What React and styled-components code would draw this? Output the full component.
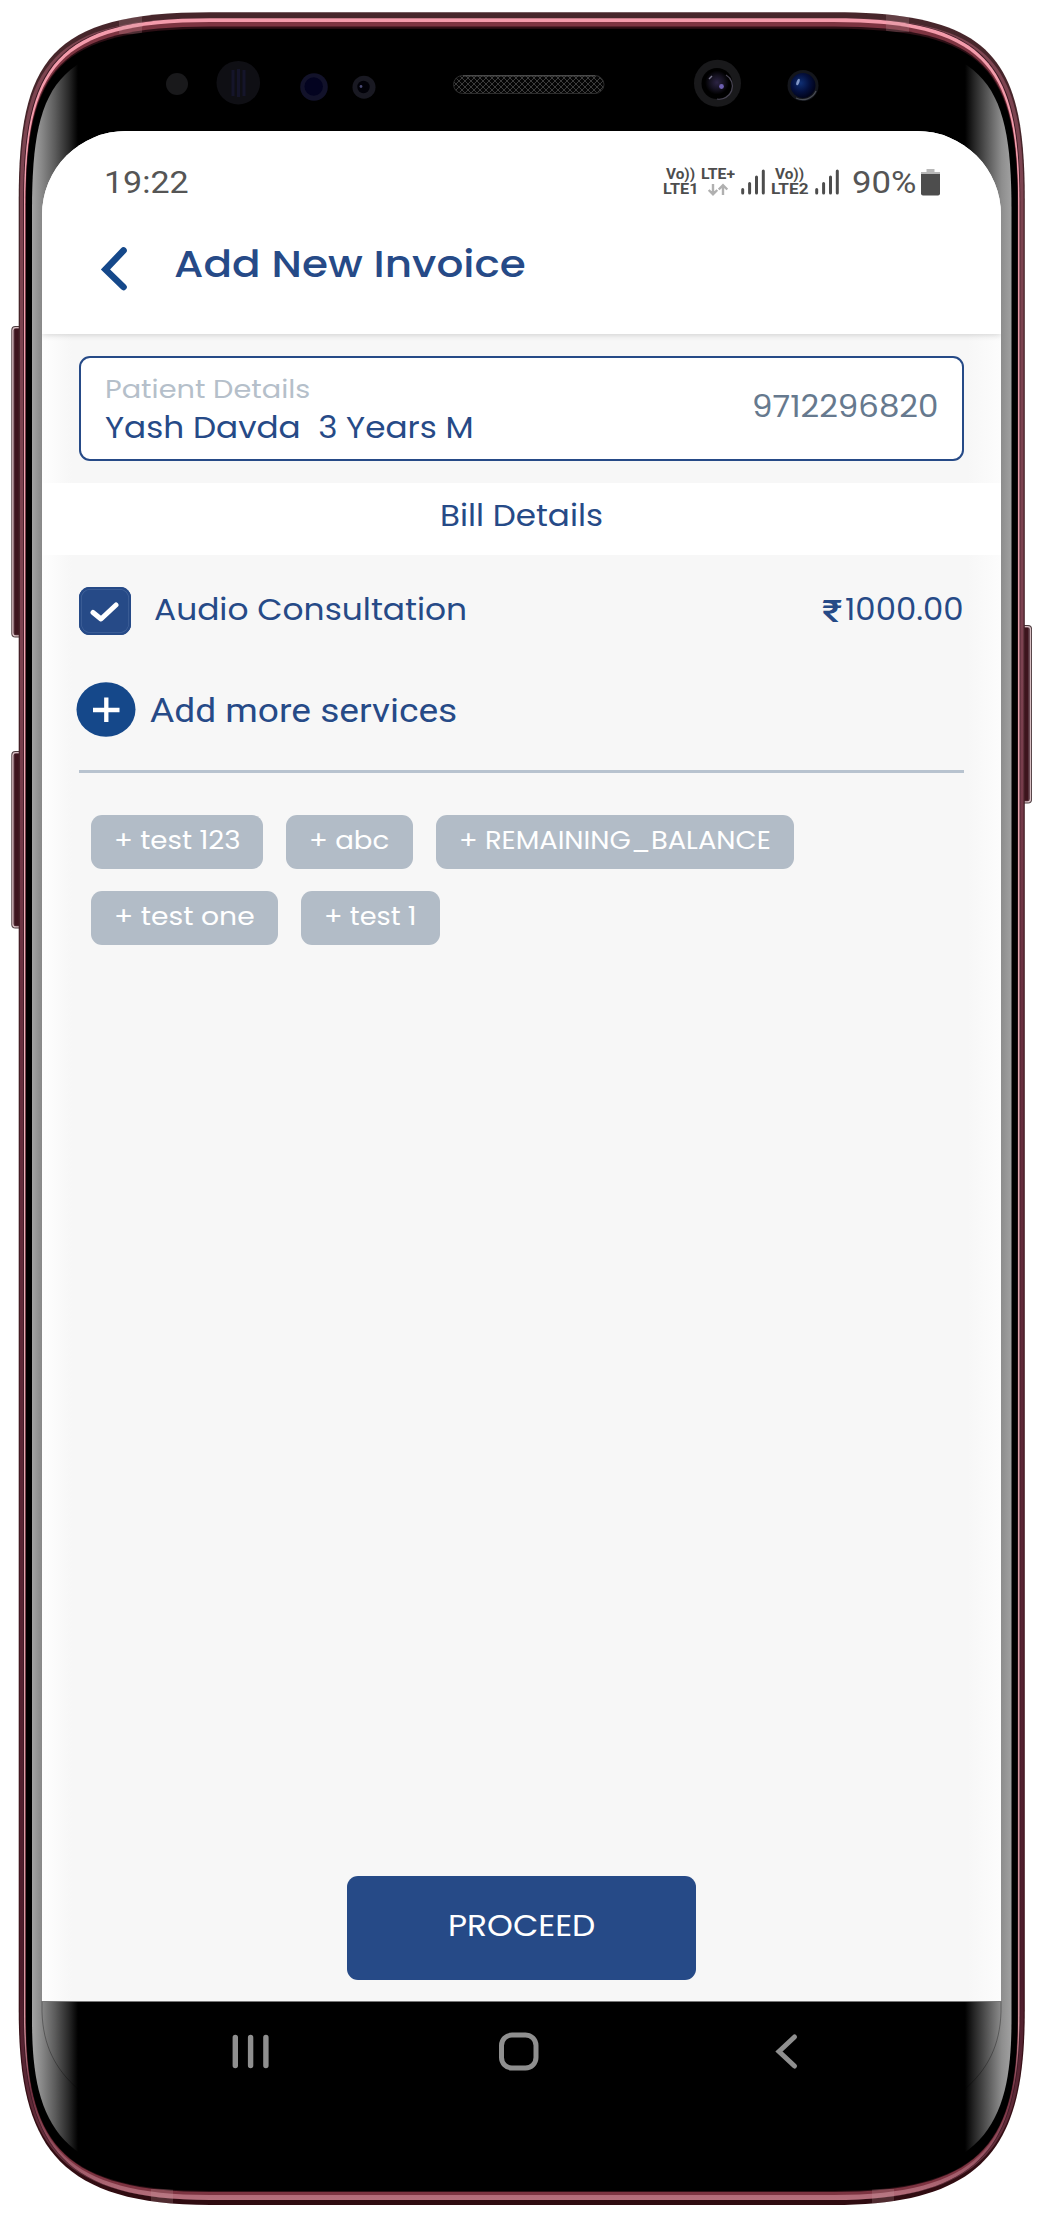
import React, { useLayoutEffect, useRef, useState } from "react";
import styled, { createGlobalStyle } from "styled-components";

const GlobalStyle = createGlobalStyle`
  html, body { margin: 0; padding: 0; background: #fff; }
  *, *::before, *::after { box-sizing: border-box; }
`;

const navy = "#264a87";
const deepBlue = "#15488a";
const slate = "#b2bcc7";
const uiFont = `Poppins, Inter, "Noto Sans", sans-serif`;
const systemFont = `Roboto, "Noto Sans", sans-serif`;

/* ---------- text that fills a given measure ---------- */

const Measure = styled.span`
  display: block;
  flex: none;
  width: ${(p) => p.$width}px;
  height: ${(p) => p.$line}px;
  line-height: ${(p) => p.$line}px;
  font-family: ${(p) => (p.$system ? systemFont : uiFont)};
  font-feature-settings: ${(p) => (p.$system ? "normal" : '"cv11" 1')};
  font-size: ${(p) => p.$size}px;
  font-weight: ${(p) => p.$weight || 400};
  color: ${(p) => p.$color || navy};
  text-align: left;
  white-space: pre;
`;

const Stretch = styled.span`
  display: inline-block;
  transform-origin: 0 50%;
`;

function FitText({ width, size, line, weight, color, system, children }) {
  const ref = useRef(null);
  const [scale, setScale] = useState(1);
  useLayoutEffect(() => {
    setScale(width / ref.current.offsetWidth);
  }, [width, size, weight, children]);
  return (
    <Measure
      $width={width}
      $size={size}
      $line={line || Math.round(size * 1.3)}
      $weight={weight}
      $color={color}
      $system={system}
    >
      <Stretch ref={ref} style={{ transform: `scaleX(${scale})` }}>
        {children}
      </Stretch>
    </Measure>
  );
}

/* ---------- device body ---------- */

const Device = styled.main`
  position: relative;
  width: 1042px;
  height: 2223px;
  overflow: hidden;
  padding: 131px 41px 0 42px;
  background: #fff;
`;

const BodyArt = styled.svg`
  position: absolute;
  inset: 0;
  display: block;
`;

const MIRROR = 1043.5;

function shell(l, t, b, k) {
  const mix = (a, z) => a + (z - a) * k;
  const y0 = mix(200, 205);
  const y1 = mix(61, 70);
  const x2 = mix(49, 58);
  const v0 = mix(2010, 2015);
  const v1 = mix(2139, 2140);
  const w2 = mix(52, 58);
  const m = (x) => MIRROR - x;
  return `M${l} ${y0}C${l} ${y1} ${x2} ${t} 210 ${t}H${m(210)}C${m(x2)} ${t} ${m(l)} ${y1} ${m(l)} ${y0}V${v0}C${m(l)} ${v1} ${m(w2)} ${b} ${m(210)} ${b}H210C${w2} ${b} ${l} ${v1} ${l} ${v0}Z`;
}

const glassEdge =
  "M32 210C32 75 60 40 215 40H828.5C983.5 40 1011.5 75 1011.5 210V2020C1011.5 2130 981.5 2180 828.5 2185H215C62 2180 32 2130 32 2020Z";

function SideKey({ x, y, height, right }) {
  return (
    <g>
      <rect x={x} y={y} width="16" height={height} rx="4" fill="#4a3a3d" />
      <rect x={x + 0.9} y={y + 0.9} width="14.2" height={height - 1.8} rx="3.4" fill="#d9c0c4" />
      <rect x={x + 2.2} y={y + 2.2} width="11.6" height={height - 4.4} rx="2.4" fill="#54303a" />
      <rect x={right ? x + 3 : x + 3.4} y={y + 3} width="9" height={height - 6} fill="#3d141d" />
    </g>
  );
}

function DeviceBody() {
  return (
    <BodyArt width="1042" height="2223" viewBox="0 0 1042 2223" aria-hidden="true">
      <defs>
        <linearGradient id="rim" x1="0" y1="0" x2="0" y2="1">
          <stop offset="0" stopColor="#47262b" />
          <stop offset="0.85" stopColor="#42161f" />
          <stop offset="1" stopColor="#2f0b10" />
        </linearGradient>
        <linearGradient id="side" x1="0" y1="0" x2="0" y2="1">
          <stop offset="0" stopColor="#7c4450" />
          <stop offset="0.3" stopColor="#7c4250" />
          <stop offset="0.45" stopColor="#6a3040" />
          <stop offset="0.9" stopColor="#4d1c2b" />
          <stop offset="1" stopColor="#6a3340" />
        </linearGradient>
        <linearGradient id="shine" x1="0" y1="0" x2="0" y2="1">
          <stop offset="0" stopColor="#f49bab" />
          <stop offset="0.5" stopColor="#f0b6be" />
          <stop offset="0.92" stopColor="#d998a2" />
          <stop offset="0.95" stopColor="#6f2f40" />
          <stop offset="1" stopColor="#b56e7b" />
        </linearGradient>
        <linearGradient id="leftGlow" gradientUnits="userSpaceOnUse" x1="32" y1="0" x2="78" y2="0">
          <stop offset="0" stopColor="#a3a3a3" />
          <stop offset="0.2" stopColor="#8a8a8a" />
          <stop offset="0.5" stopColor="#5c5c5c" />
          <stop offset="0.8" stopColor="#282828" />
          <stop offset="1" stopColor="#000" />
        </linearGradient>
        <linearGradient id="rightGlow" gradientUnits="userSpaceOnUse" x1="1011" y1="0" x2="965" y2="0">
          <stop offset="0" stopColor="#a0a0a0" />
          <stop offset="0.2" stopColor="#8e8e8e" />
          <stop offset="0.5" stopColor="#5a5a5a" />
          <stop offset="0.8" stopColor="#262626" />
          <stop offset="1" stopColor="#000" />
        </linearGradient>
        <pattern id="mesh" width="6" height="6" patternUnits="userSpaceOnUse">
          <rect width="6" height="6" fill="#050505" />
          <path d="M0 0l6 6M6 0l-6 6" stroke="#3c3c3c" strokeWidth="1" />
        </pattern>
        <radialGradient id="blueLens" cx="0.4" cy="0.4" r="0.6">
          <stop offset="0" stopColor="#0f2f74" />
          <stop offset="0.6" stopColor="#04103e" />
          <stop offset="1" stopColor="#01041c" />
        </radialGradient>
        <radialGradient id="lens" cx="0.5" cy="0.5" r="0.5">
          <stop offset="0" stopColor="#2c2444" />
          <stop offset="0.6" stopColor="#14111f" />
          <stop offset="1" stopColor="#000" />
        </radialGradient>
        <clipPath id="bodyClip">
          <path d={shell(18.7, 12.3, 2205, 0)} />
        </clipPath>
        <clipPath id="glassClip">
          <path d={glassEdge} />
        </clipPath>
      </defs>

      <SideKey x={11.3} y={326} height={311.5} />
      <SideKey x={11.3} y={751} height={177.5} />
      <SideKey x={1016} y={625} height={178.5} right />

      <path d={shell(18.7, 12.3, 2205, 0)} fill="url(#rim)" />
      <path d={shell(20, 18, 2200, 0.2)} fill="url(#side)" />
      <path d={shell(23.2, 18, 2200, 0.5)} fill="#3a1822" />
      <path d={shell(24, 18.2, 2200, 0.6)} fill="url(#shine)" />
      <path d={shell(25.4, 22, 2195, 0.85)} fill="#7d3441" />
      <path d={shell(25.6, 26.5, 2192, 0.95)} fill="#2c0f15" />
      <g clipPath="url(#bodyClip)" fill="#c9a0a6" opacity="0.22">
        <rect x="119" y="12" width="23" height="22" />
        <rect x="886" y="12" width="23" height="20" />
        <rect x="151" y="2189" width="22" height="16" />
        <rect x="872" y="2189" width="22" height="16" />
      </g>
      <path d={shell(26, 28.7, 2191, 1)} fill="#000" />

      <g clipPath="url(#glassClip)">
        <rect x="31" y="40" width="47" height="2150" fill="url(#leftGlow)" />
        <rect x="965" y="40" width="47" height="2150" fill="url(#rightGlow)" />
      </g>
      <path d="M42 2001V2012C43 2045 55 2069 78 2089M1001 2001V2012C1000 2045 988 2069 965 2089" fill="none" stroke="#000" strokeOpacity="0.45" strokeWidth="0.7" />

      <circle cx="177" cy="84" r="11" fill="#19191b" />
      <circle cx="238.3" cy="82.7" r="21.8" fill="#0f0f14" />
      <path d="M233 70v26M238.5 69v28M244 70v26" stroke="#15152a" strokeWidth="3" />
      <circle cx="314" cy="87" r="13.8" fill="#12122a" />
      <circle cx="313.7" cy="86.5" r="9.2" fill="#030320" />
      <circle cx="364" cy="87.2" r="11.5" fill="#191922" />
      <circle cx="363.5" cy="87" r="6.2" fill="#010108" />
      <circle cx="361" cy="86.5" r="1.4" fill="#4a4a74" />
      <rect x="453.5" y="75.5" width="150.5" height="18" rx="9" fill="url(#mesh)" stroke="#2c2c2c" />
      <path d="M463 75.7H595" stroke="#4a4a4a" strokeWidth="1.4" />
      <circle cx="717.5" cy="83.3" r="23.5" fill="#19191b" />
      <circle cx="717" cy="83.5" r="15.5" fill="#000" />
      <circle cx="717" cy="82.5" r="12" fill="url(#lens)" />
      <path d="M726 75a13 13 0 0 1-9 24" fill="none" stroke="#4a4655" strokeWidth="1.2" />
      <circle cx="721.5" cy="86.5" r="2.4" fill="#6d5fb0" />
      <path d="M709 79l3-3" stroke="#77738a" strokeWidth="1.5" />
      <circle cx="803" cy="85.5" r="15.5" fill="#14161c" />
      <circle cx="803" cy="85.5" r="12.5" fill="url(#blueLens)" />
      <ellipse cx="798" cy="82" rx="1.4" ry="3.4" fill="#8398c8" transform="rotate(20 798 82)" />
      <path d="M816 91a14.5 14.5 0 0 1-20 7" fill="none" stroke="#4a4d55" strokeWidth="1.2" />
    </BodyArt>
  );
}

/* ---------- screen ---------- */

const Screen = styled.div`
  position: relative;
  display: flex;
  flex-direction: column;
  height: 1870px;
  border-radius: 84px 84px 0 0;
  overflow: hidden;
  background: linear-gradient(to right, #fefefe 0, #f7f7f7 30px, #f7f7f7 926px, #fcfcfc 959px);
`;

const StatusBar = styled.div`
  position: relative;
  z-index: 2;
  display: flex;
  align-items: center;
  justify-content: space-between;
  flex: none;
  height: 102px;
  padding: 0 61px 0 62px;
  background: #fff;
`;

const StatusIcons = styled.div`
  display: flex;
  align-items: center;
`;

const NetStack = styled.div`
  display: flex;
  flex-direction: column;
  align-items: center;
  height: 30px;
  margin: 0 ${(p) => p.$after}px 1px 0;
`;

const Glyph = styled.svg`
  display: block;
  flex: none;
  margin-left: ${(p) => p.$before || 0}px;
  margin-right: ${(p) => p.$after || 0}px;
`;

const NetLabel = ({ width, children }) => (
  <FitText width={width} size={15.3} line={15} weight={700} color="#4d4d4d" system>
    {children}
  </FitText>
);

function Signal({ after }) {
  return (
    <Glyph $after={after} width="24" height="26" viewBox="0 0 24 26" stroke="#4d4d4d" strokeWidth="3" strokeLinecap="round">
      <path d="M1.7 20.5V24M8.6 14.5V24M15.5 8V24M22.3 2V24" />
    </Glyph>
  );
}

const Header = styled.header`
  display: flex;
  align-items: flex-start;
  flex: none;
  position: relative;
  z-index: 1;
  height: 101px;
  padding: 8px 0 0 58px;
  background: #fff;
  box-shadow: 0 1px 6px rgba(0, 0, 0, 0.16);
`;

const BackIcon = styled.svg`
  display: block;
  margin: 5px 46px 0 0;
`;

const PatientSection = styled.section`
  flex: none;
  height: 148.5px;
  padding: 21.5px 37px 0;
`;

const PatientCard = styled.div`
  display: flex;
  justify-content: space-between;
  height: 105.5px;
  padding: 13px 24px 0 24px;
  border: 2px solid ${navy};
  border-radius: 11px;
  background: #fff;
`;

const PatientText = styled.div`
  display: flex;
  flex-direction: column;
  gap: 2px;
`;

const PhoneNumber = styled.div`
  padding-top: 17px;
`;

const BillHeading = styled.div`
  display: flex;
  justify-content: center;
  align-items: center;
  flex: none;
  height: 72px;
  padding-bottom: 5px;
  background: #fff;
`;

const Services = styled.section`
  display: flex;
  flex-direction: column;
  flex: none;
  padding: 32px 37px 0;
`;

const ServiceRow = styled.div`
  display: flex;
  align-items: center;
  height: 48px;
`;

const CheckBox = styled.div`
  display: grid;
  place-items: center;
  width: 52px;
  height: 48px;
  margin-right: 23px;
  border-radius: 11px;
  background: ${navy};
  box-shadow: inset 0 0 0 2px ${navy}, inset 0 0 0 2.7px #42639a;
`;

const ServiceName = styled.div`
  padding-bottom: 2px;
`;

const Price = styled.div`
  display: flex;
  align-items: center;
  gap: 3px;
  margin-left: auto;
  padding-bottom: 2px;
`;

const CurrencySign = styled.div`
  padding-top: 4px;
`;

const AddRow = styled.div`
  display: flex;
  align-items: center;
  height: 55px;
  margin: 47px 0 33px -3px;
`;

const AddIcon = styled.svg`
  display: block;
  margin-right: 14px;
`;

const AddLabel = styled.div`
  padding-top: 3px;
`;

const Divider = styled.hr`
  width: 100%;
  height: 3px;
  margin: 0 0 42.5px;
  border: 0;
  background: #b8c3cf;
`;

const ChipList = styled.div`
  display: flex;
  flex-wrap: wrap;
  gap: 22px 23.3px;
  padding-left: 12px;
`;

const Chip = styled.button`
  display: flex;
  align-items: center;
  height: 54px;
  padding: 0 23px 4px;
  border: 0;
  border-radius: 11px;
  background: ${slate};
`;

const Footer = styled.footer`
  display: flex;
  justify-content: center;
  margin-top: auto;
  padding-bottom: 21px;
`;

const Proceed = styled.button`
  display: flex;
  align-items: center;
  justify-content: center;
  width: 349px;
  height: 104px;
  padding: 0 0 5px;
  border: 0;
  border-radius: 11px;
  background: ${navy};
`;

const NavBar = styled.nav`
  position: relative;
  display: flex;
  align-items: center;
  height: 101px;
  padding-left: 190px;
  border-top: 1px solid #777;
`;

const chips = [
  { label: "+ test 123", width: 126 },
  { label: "+ abc", width: 80.5 },
  { label: "+ REMAINING_BALANCE", width: 312 },
  { label: "+ test one", width: 140.5 },
  { label: "+ test 1", width: 93 },
];

export default function App() {
  return (
    <>
      <GlobalStyle />
      <Device>
        <DeviceBody />
        <Screen>
          <StatusBar>
            <FitText width={85} size={32} line={40} color="#555" system>
              19:22
            </FitText>
            <StatusIcons>
              <NetStack $after={3}>
                <NetLabel width={29}>Vo))</NetLabel>
                <NetLabel width={35}>LTE1</NetLabel>
              </NetStack>
              <NetStack $after={6}>
                <NetLabel width={34}>LTE+</NetLabel>
                <Glyph width="22" height="15" viewBox="0 0 22 15" fill="none" stroke="#b0b0b0" strokeWidth="2.4">
                  <path d="M6 2v10M1.700 8L6 12.300L10.300 8M16 13V3.500M11.700 7.500L16 3.200L20.300 7.500" />
                </Glyph>
              </NetStack>
              <Signal after={6} />
              <NetStack $after={7}>
                <NetLabel width={29}>Vo))</NetLabel>
                <NetLabel width={37}>LTE2</NetLabel>
              </NetStack>
              <Signal after={13} />
              <FitText width={64} size={32} line={40} color="#555" system>
                90%
              </FitText>
              <Glyph $before={5} width="19" height="28" viewBox="0 0 19 28">
                <path d="M5.500 1h8v3H19v3H0V4h5.500z" fill="#b8b8b8" />
                <path d="M0 6h19v19.500a2 2 0 0 1-2 2H2a2 2 0 0 1-2-2z" fill="#4d4d4d" />
              </Glyph>
            </StatusIcons>
          </StatusBar>
          <Header>
            <BackIcon width="28" height="46" viewBox="0 0 28 46" fill="none" stroke={deepBlue} strokeWidth="6.600" strokeLinecap="round">
              <path d="M23.500 4.500L5.500 23.500L23.500 41" strokeLinejoin="miter" />
            </BackIcon>
            <FitText width={352} size={37} line={46} weight={500}>
              Add New Invoice
            </FitText>
          </Header>
          <PatientSection>
            <PatientCard>
              <PatientText>
                <FitText width={205} size={25.7} line={36} color="#b5bfca">
                  Patient Details
                </FitText>
                <FitText width={369} size={29.6} line={38}>
                  {"Yash Davda  3 Years M"}
                </FitText>
              </PatientText>
              <PhoneNumber>
                <FitText width={186} size={30} line={38} color="#66798e">
                  9712296820
                </FitText>
              </PhoneNumber>
            </PatientCard>
          </PatientSection>
          <BillHeading>
            <FitText width={163} size={29.6} line={38}>
              Bill Details
            </FitText>
          </BillHeading>
          <Services>
            <ServiceRow>
              <CheckBox>
                <svg width="30" height="22" viewBox="0 0 30 22" fill="none" stroke="#fff" strokeWidth="5" strokeLinecap="round" strokeLinejoin="round">
                  <path d="M3 12.500L11 19L26 5" />
                </svg>
              </CheckBox>
              <ServiceName>
                <FitText width={313} size={29.6} line={42}>
                  Audio Consultation
                </FitText>
              </ServiceName>
              <Price>
                <CurrencySign>
                  <FitText width={20} size={31} line={38} weight={500} system>
                    ₹
                  </FitText>
                </CurrencySign>
                <FitText width={119} size={29.6} line={42}>
                  1000.00
                </FitText>
              </Price>
            </ServiceRow>
            <AddRow>
              <AddIcon width="60" height="55" viewBox="0 0 60 55">
                <ellipse cx="30" cy="27.500" rx="29.500" ry="27.300" fill={deepBlue} />
                <path d="M17 28H43.500M30.300 15.500V40" stroke="#fff" strokeWidth="4.300" />
              </AddIcon>
              <AddLabel>
                <FitText width={307} size={33.5} line={40} system>
                  Add more services
                </FitText>
              </AddLabel>
            </AddRow>
            <Divider />
            <ChipList>
              {chips.map((chip) => (
                <Chip key={chip.label} type="button">
                  <FitText width={chip.width} size={25.7} line={36} color="#fff">
                    {chip.label}
                  </FitText>
                </Chip>
              ))}
            </ChipList>
          </Services>
          <Footer>
            <Proceed type="button">
              <FitText width={147} size={30} line={40} color="#fff">
                PROCEED
              </FitText>
            </Proceed>
          </Footer>
        </Screen>
        <NavBar>
          <Glyph $after={229} width="38" height="38" viewBox="0 0 38 38" stroke="#8f8f8f" strokeWidth="5.400" strokeLinecap="round">
            <path d="M3.300 4.500V32.500M18.600 4.500V32.500M33.900 4.500V32.500" />
          </Glyph>
          <Glyph $after={236} width="40" height="40" viewBox="0 0 40 40" fill="none" stroke="#8f8f8f" strokeWidth="5">
            <rect x="2.500" y="3" width="34.500" height="33" rx="10.500" />
          </Glyph>
          <Glyph width="24" height="38" viewBox="0 0 24 38" fill="none" stroke="#8f8f8f" strokeWidth="5" strokeLinecap="round">
            <path d="M19.500 4L4 18.500L19.500 33" />
          </Glyph>
        </NavBar>
      </Device>
    </>
  );
}
